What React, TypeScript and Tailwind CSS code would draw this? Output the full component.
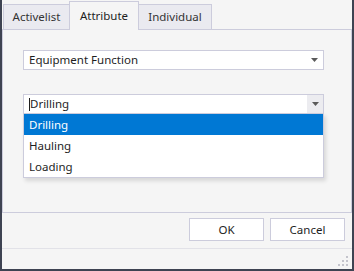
const font = { fontFamily: '"Segoe UI", "Noto Sans", "Liberation Sans", sans-serif' };

function Arrow() {
  return (
    <svg width="7" height="4" viewBox="0 0 7 4" className="block">
      <path d="M0 0H7L3.5 4Z" fill="#5a5a5a" />
    </svg>
  );
}

function Grip() {
  const dots = [
    [8, 0],
    [4, 4],
    [8, 4],
    [0, 8],
    [4, 8],
    [8, 8],
  ];
  return (
    <svg width="10" height="10" viewBox="0 0 10 10" className="block">
      {dots.map(([x, y]) => (
        <rect key={`${x}-${y}`} x={x} y={y} width="2" height="2" fill="#c4c4cc" />
      ))}
    </svg>
  );
}

const tabs = ["Activelist", "Attribute", "Individual"];
const options = ["Drilling", "Hauling", "Loading"];

export default function App() {
  return (
    <div
      style={font}
      className="flex h-[271px] w-[354px] flex-col border-x-2 border-b-2 border-[#3e4352] bg-[#f5f5f5] text-[11.5px] text-[#1e1e1e]"
    >
      {/* tab strip */}
      <div className="flex h-[29px] items-end pl-px">
        {tabs.map((t) => {
          const active = t === "Attribute";
          return (
            <div
              key={t}
              className={
                active
                  ? "relative z-10 -mb-px flex h-[29px] w-[70px] items-center justify-center border-x border-t border-[#ccccdc] bg-[#f5f5f5] pb-px"
                  : t === "Activelist"
                  ? "flex h-[25px] w-[66px] items-center justify-center border-l border-t border-[#ccccdc] bg-[#eaeaf0] text-[#333]"
                  : "flex h-[25px] w-[73px] items-center justify-center border-r border-t border-[#ccccdc] bg-[#eaeaf0] text-[#333]"
              }
            >
              {t}
            </div>
          );
        })}
      </div>

      {/* tab page */}
      <div className="h-[184px] border border-[#ccccdc] pl-5 pt-5">
        <div className="flex h-5 w-[301px] items-center justify-between border border-[#ccccdc] bg-white pl-[5px] pr-[5px]">
          <span>Equipment Function</span>
          <Arrow />
        </div>

        <div className="relative mt-6 w-[301px]">
          <div className="flex h-5 items-stretch border border-[#ccccdc] bg-white">
            <div className="flex flex-1 items-center pl-[5px]">
              <span className="h-[13px] w-px bg-[#1e1e1e]" />
              <span>Drilling</span>
            </div>
            <div className="flex w-4 items-center justify-center bg-[#ececf0]">
              <Arrow />
            </div>
          </div>

          <div className="absolute left-0 top-[19px] w-[301px] border border-[#ccccdc] bg-white shadow-[2px_3px_4px_rgba(0,0,0,0.12)]">
            {options.map((o, i) => (
              <div
                key={o}
                className={
                  i === 0
                    ? "flex h-[21px] items-center bg-[#0078d4] pl-[5px] text-white"
                    : "flex h-[21px] items-center pl-[5px]"
                }
              >
                {o}
              </div>
            ))}
          </div>
        </div>
      </div>

      {/* buttons */}
      <div className="flex h-[35px] justify-end gap-[6px] pr-[7px] pt-[5px]">
        <button className="h-[23px] w-[75px] border border-[#ccccdc] bg-white">OK</button>
        <button className="h-[23px] w-[75px] border border-[#ccccdc] bg-white">Cancel</button>
      </div>

      {/* status strip */}
      <div className="flex h-[21px] items-end justify-end border-t border-[#e2e2e8] pb-[3px] pr-[4px]">
        <Grip />
      </div>
    </div>
  );
}
